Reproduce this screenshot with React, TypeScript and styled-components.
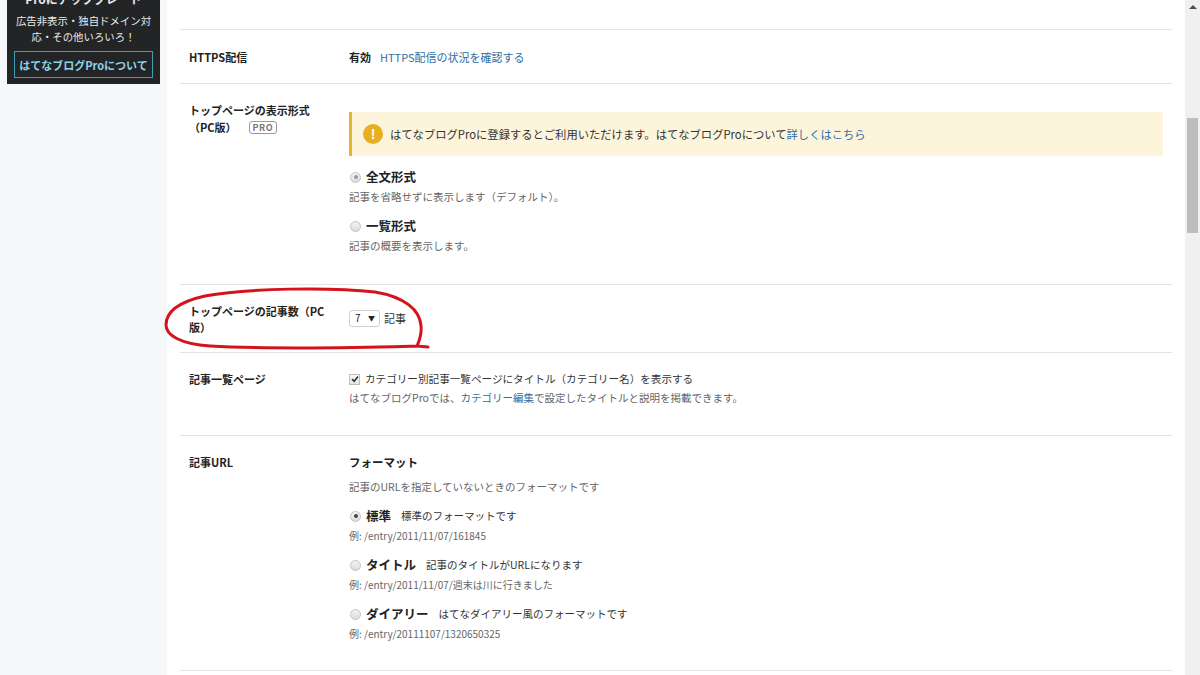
import React from "react";
import styled, { createGlobalStyle } from "styled-components";

const GlobalStyle = createGlobalStyle`
  html, body {
    margin: 0;
    padding: 0;
    overflow: hidden;
    background: #f6f7f9;
  }
  body {
    font-family: "Noto Sans CJK JP", "Noto Sans", sans-serif;
    color: #333;
  }
`;

const Page = styled.div`
  position: relative;
  display: flex;
  width: 1200px;
  height: 675px;
  overflow: hidden;
`;

const Sidebar = styled.aside`
  width: 167px;
  flex-shrink: 0;
  padding-left: 7px;
  box-sizing: border-box;
  background: #f6f7f9;
`;

const ProBox = styled.div`
  width: 153px;
  margin-top: -12px;
  padding: 3px 7px 6px;
  box-sizing: border-box;
  background: #222426;
  color: #eaeaea;
  text-align: center;
`;

const ProTitle = styled.div`
  font-size: 12px;
  font-weight: 700;
  line-height: 16px;
`;

const ProText = styled.div`
  margin: 6px -3px 0;
  font-size: 10.4px;
  line-height: 16px;
  white-space: nowrap;
`;

const ProButton = styled.div`
  margin-top: 6px;
  height: 27px;
  border: 1px solid #3f9db3;
  box-sizing: border-box;
  display: flex;
  align-items: center;
  justify-content: center;
  font-size: 11px;
  font-weight: 700;
  color: #8fd3e8;
`;

const Main = styled.main`
  flex: 1;
  background: #fff;
  padding: 29px 13px 0;
  box-sizing: border-box;
`;

const Row = styled.section<{ $pb: number }>`
  display: flex;
  border-top: 1px solid #e4e4e4;
  padding: 18px 9px ${(p) => p.$pb}px;
  &:last-child {
    border-bottom: 1px solid #e4e4e4;
  }
`;

const Label = styled.div<{ $lh?: number }>`
  width: 160px;
  flex-shrink: 0;
  font-size: 11px;
  font-weight: 700;
  line-height: ${(p) => p.$lh ?? 16}px;
  color: #222;
`;

const ProBadge = styled.span`
  display: inline-block;
  margin-left: 12px;
  padding: 0 3px;
  border: 1px solid #999;
  border-radius: 3px;
  font-size: 9px;
  line-height: 11px;
  color: #777;
  letter-spacing: 0.5px;
  vertical-align: 1px;
`;

const Value = styled.div`
  flex: 1;
  font-size: 11px;
  line-height: 16px;
`;

const InlineLine = styled.div<{ $lh?: number; $gap?: number }>`
  display: flex;
  align-items: center;
  gap: ${(p) => p.$gap ?? 9}px;
  line-height: ${(p) => p.$lh ?? 16}px;
`;

const Strong = styled.span`
  font-weight: 700;
  color: #222;
`;

const Link = styled.a`
  color: #2f6ea3;
  text-decoration: none;
`;

const Notice = styled.div`
  margin-top: 10px;
  height: 44px;
  display: flex;
  align-items: center;
  gap: 7px;
  padding-left: 11px;
  background: #fcf5dc;
  border-left: 3px solid #e6b52e;
  color: #333;
  font-size: 11.3px;
`;

const NoticeIcon = styled.span`
  width: 20px;
  height: 20px;
  border-radius: 50%;
  background: #e8b020;
  color: #fff;
  font-weight: 700;
  font-size: 14px;
  line-height: 20px;
  text-align: center;
  font-family: "Liberation Sans", sans-serif;
`;

const OptionList = styled.div`
  margin-top: 11px;
  display: flex;
  flex-direction: column;
  gap: 10px;
`;

const OptionHead = styled.div`
  display: flex;
  align-items: center;
  height: 20px;
`;

const Radio = styled.span<{ $checked?: boolean; $muted?: boolean }>`
  position: relative;
  width: 9px;
  height: 9px;
  margin: 0 5px 0 1px;
  border-radius: 50%;
  border: 1px solid #c2c2c2;
  background: linear-gradient(#f4f4f4, #dcdcdc);
  flex-shrink: 0;
  &::after {
    content: "";
    display: ${(p) => (p.$checked ? "block" : "none")};
    position: absolute;
    left: 2.5px;
    top: 2.5px;
    width: 4px;
    height: 4px;
    border-radius: 50%;
    background: ${(p) => (p.$muted ? "#9a9a9a" : "#444")};
  }
`;

const OptionTitle = styled.span`
  font-size: 12.5px;
  font-weight: 700;
  color: #222;
  margin-right: 10px;
`;

const OptionHint = styled.span`
  font-size: 10.5px;
  color: #333;
`;

const Desc = styled.div<{ $size?: number; $mt?: number; $lh?: number }>`
  margin-top: ${(p) => p.$mt ?? 1}px;
  font-size: ${(p) => p.$size ?? 10.5}px;
  line-height: ${(p) => p.$lh ?? 18}px;
  color: #666;
`;

const Select = styled.div`
  display: flex;
  align-items: center;
  justify-content: space-between;
  width: 31px;
  height: 17px;
  padding: 0 4px 0 5px;
  box-sizing: border-box;
  border: 1px solid #d0d0d0;
  border-radius: 3px;
  font-size: 10px;
  color: #222;
`;

const Arrow = styled.span`
  font-size: 7px;
`;

const Checkbox = styled.span`
  display: inline-flex;
  align-items: center;
  justify-content: center;
  width: 9px;
  height: 9px;
  margin-right: 5px;
  border: 1px solid #bdbdbd;
  background: linear-gradient(#fafafa, #e2e2e2);
`;

const CheckText = styled.span`
  font-size: 10.6px;
`;

const Heading = styled.div`
  font-size: 11.5px;
  font-weight: 600;
  line-height: 16px;
  color: #222;
`;

const SubDesc = styled.div`
  margin-top: 9px;
  font-size: 10.5px;
  line-height: 16px;
  color: #666;
`;

const Scrollbar = styled.div`
  width: 15px;
  flex-shrink: 0;
  background: #f0f0f0;
  display: flex;
  flex-direction: column;
  align-items: center;
`;

const ScrollArrow = styled.div`
  margin-top: 5px;
  width: 0;
  height: 0;
  border-left: 4px solid transparent;
  border-right: 4px solid transparent;
  border-bottom: 4px solid #505050;
`;

const Thumb = styled.div`
  margin-top: 109px;
  width: 11px;
  height: 115px;
  background: #bdbdbd;
`;

const Marker = styled.svg`
  position: absolute;
  left: 0;
  top: 0;
  pointer-events: none;
`;

type Opt = { title: string; hint?: string; desc: string; checked?: boolean; muted?: boolean };

const formatOptions: Opt[] = [
  { title: "標準", hint: "標準のフォーマットです", desc: "例: /entry/2011/11/07/161845", checked: true },
  { title: "タイトル", hint: "記事のタイトルがURLになります", desc: "例: /entry/2011/11/07/週末は川に行きました" },
  { title: "ダイアリー", hint: "はてなダイアリー風のフォーマットです", desc: "例: /entry/20111107/1320650325" },
];

const viewOptions: Opt[] = [
  { title: "全文形式", desc: "記事を省略せずに表示します（デフォルト）。", checked: true, muted: true },
  { title: "一覧形式", desc: "記事の概要を表示します。" },
];

function Options({ items, descSize }: { items: Opt[]; descSize?: number }) {
  return (
    <OptionList>
      {items.map((o) => (
        <div key={o.title}>
          <OptionHead>
            <Radio $checked={o.checked} $muted={o.muted} />
            <OptionTitle>{o.title}</OptionTitle>
            {o.hint && <OptionHint>{o.hint}</OptionHint>}
          </OptionHead>
          <Desc $size={descSize}>{o.desc}</Desc>
        </div>
      ))}
    </OptionList>
  );
}

export default function App() {
  return (
    <Page>
      <GlobalStyle />
      <Sidebar>
        <ProBox>
          <ProTitle>Proにアップグレード</ProTitle>
          <ProText>
            広告非表示・独自ドメイン対
            <br />
            応・その他いろいろ！
          </ProText>
          <ProButton>はてなブログProについて</ProButton>
        </ProBox>
      </Sidebar>

      <Main>
        <Row $pb={17}>
          <Label $lh={18}>HTTPS配信</Label>
          <Value>
            <InlineLine $lh={18}>
              <Strong>有効</Strong>
              <Link>HTTPS配信の状況を確認する</Link>
            </InlineLine>
          </Value>
        </Row>

        <Row $pb={29}>
          <Label $lh={17}>
            トップページの表示形式
            <br />
            （PC版）<ProBadge>PRO</ProBadge>
          </Label>
          <Value>
            <Notice>
              <NoticeIcon>!</NoticeIcon>
              <span>
                はてなブログProに登録するとご利用いただけます。はてなブログProについて
                <Link>詳しくはこちら</Link>
              </span>
            </Notice>
            <Options items={viewOptions} />
          </Value>
        </Row>

        <Row $pb={17}>
          <Label>
            トップページの記事数（PC
            <br />
            版）
          </Label>
          <Value>
            <InlineLine $lh={30} $gap={4}>
              <Select>
                <span>7</span>
                <Arrow>▼</Arrow>
              </Select>
              <span>記事</span>
            </InlineLine>
          </Value>
        </Row>

        <Row $pb={29}>
          <Label>記事一覧ページ</Label>
          <Value>
            <InlineLine $gap={0}>
              <Checkbox>
                <svg width="8" height="8" viewBox="0 0 8 8">
                  <path d="M1 4.2 L3.2 6.3 L7 1.5" fill="none" stroke="#333" strokeWidth="1.6" />
                </svg>
              </Checkbox>
              <CheckText>カテゴリー別記事一覧ページにタイトル（カテゴリー名）を表示する</CheckText>
            </InlineLine>
            <Desc $mt={3} $lh={16}>
              はてなブログProでは、<Link>カテゴリー編集</Link>で設定したタイトルと説明を掲載できます。
            </Desc>
          </Value>
        </Row>

        <Row $pb={27}>
          <Label>記事URL</Label>
          <Value>
            <Heading>フォーマット</Heading>
            <SubDesc>記事のURLを指定していないときのフォーマットです</SubDesc>
            <Options items={formatOptions} descSize={10} />
          </Value>
        </Row>
      </Main>

      <Scrollbar>
        <ScrollArrow />
        <Thumb />
      </Scrollbar>

      <Marker width="1200" height="675" viewBox="0 0 1200 675">
        <path
          d="M205 296 C250 288 330 287 375 292 C405 297 420 310 421 326 C422 335 419 341 417 346 L428 347 M419 346 C360 348 260 349 210 346 C180 344 166 335 166 325 C166 312 178 302 205 296"
          fill="none"
          stroke="#d4141c"
          strokeWidth="3"
          strokeLinecap="round"
          strokeLinejoin="round"
        />
      </Marker>
    </Page>
  );
}
